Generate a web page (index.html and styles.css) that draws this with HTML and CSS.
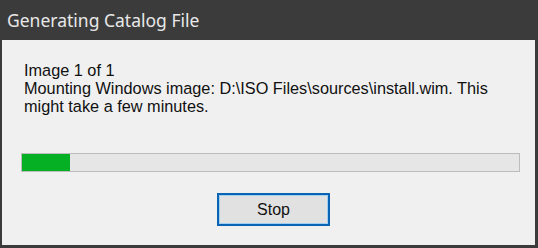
FILE: index.html
```html
<!DOCTYPE html>
<html lang="en">
<head>
  <meta charset="UTF-8">
  <title>Generating Catalog File</title>
  <link rel="stylesheet" href="styles.css">
</head>
<body>
  <div class="dialog">
    <div class="titlebar">Generating Catalog File</div>
    <div class="content">
      <div class="message">
        Image 1 of 1<br>
        Mounting Windows image: D:\ISO Files\sources\install.wim. This might take a few minutes.
      </div>
      <div class="progress">
        <div class="progress-fill" style="width: 9.6%"></div>
      </div>
      <div class="actions">
        <button class="btn">Stop</button>
      </div>
    </div>
  </div>
</body>
</html>
```

FILE: styles.css
```css
body {
  margin: 0;
  background: #3a3a3a;
}

.dialog {
  width: 538px;
  height: 248px;
  box-sizing: border-box;
  display: flex;
  flex-direction: column;
  background: #3b3b3b;
  padding: 0 3px 3px 2px;
}

.titlebar {
  height: 40px;
  box-sizing: border-box;
  padding: 8px 0 0 5px;
  color: #e8e8e8;
  font-family: "Noto Sans", "Open Sans", sans-serif;
  font-size: 17.5px;
}

.content {
  flex: 1;
  background: #f0f0f0;
  padding: 21px 15px 0 19px;
  display: flex;
  flex-direction: column;
}

.message {
  font-family: "Liberation Sans", Arial, sans-serif;
  font-size: 16.3px;
  line-height: 18px;
  color: #111;
  padding: 0 16px 0 3px;
}

.progress {
  margin-top: 38px;
  height: 19px;
  box-sizing: border-box;
  border: 1px solid #bcbcbc;
  background: #e6e6e6;
}

.progress-fill {
  height: 100%;
  background: #06b025;
}

.actions {
  display: flex;
  justify-content: center;
  margin-top: 21px;
  padding-left: 6px;
}

.btn {
  width: 113px;
  height: 33px;
  border: 2px solid #0a64b4;
  background: #e1e1e1;
  font-family: "Liberation Sans", Arial, sans-serif;
  font-size: 16px;
  color: #111;
  padding: 0;
  box-shadow: inset 0 0 0 1px #9fd0f0;
}
```
